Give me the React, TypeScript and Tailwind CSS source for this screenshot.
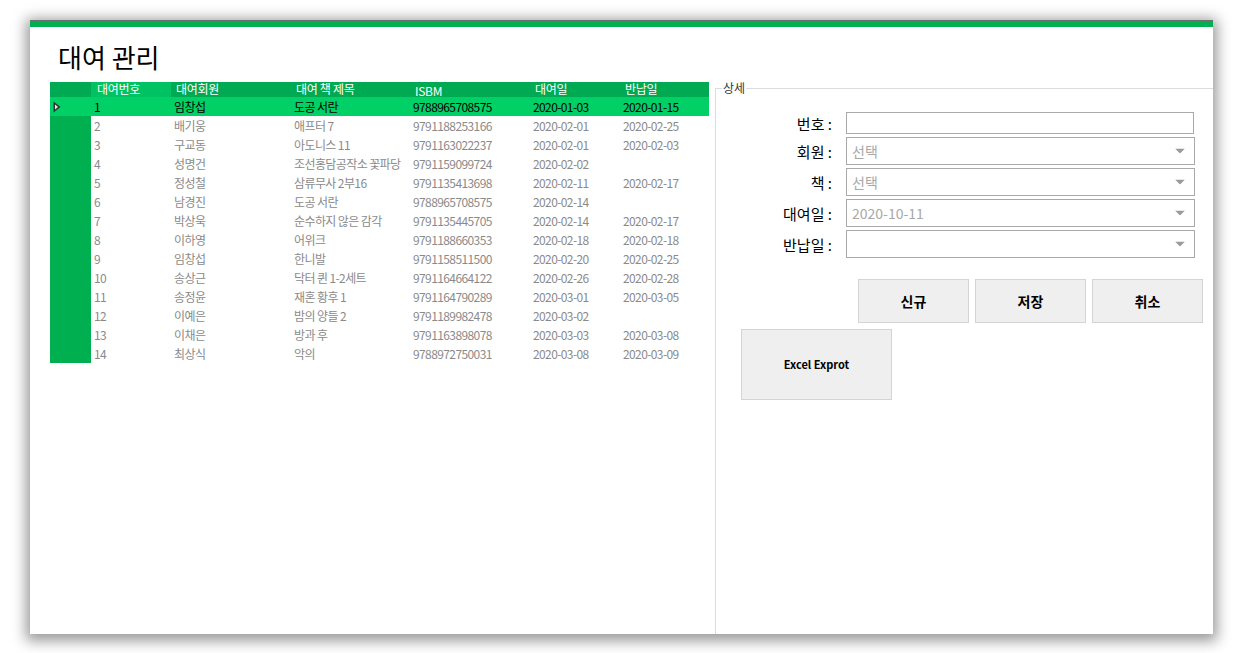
import React from "react";

const rows = [
  ["1", "임창섭", "도공 서란", "9788965708575", "2020-01-03", "2020-01-15"],
  ["2", "배기웅", "애프터 7", "9791188253166", "2020-02-01", "2020-02-25"],
  ["3", "구교동", "아도니스 11", "9791163022237", "2020-02-01", "2020-02-03"],
  ["4", "성명건", "조선홍담공작소 꽃파당", "9791159099724", "2020-02-02", ""],
  ["5", "정성철", "삼류무사 2부16", "9791135413698", "2020-02-11", "2020-02-17"],
  ["6", "남경진", "도공 서란", "9788965708575", "2020-02-14", ""],
  ["7", "박상욱", "순수하지 않은 감각", "9791135445705", "2020-02-14", "2020-02-17"],
  ["8", "이하영", "어위크", "9791188660353", "2020-02-18", "2020-02-18"],
  ["9", "임창섭", "한니발", "9791158511500", "2020-02-20", "2020-02-25"],
  ["10", "송상근", "닥터 퀸 1-2세트", "9791164664122", "2020-02-26", "2020-02-28"],
  ["11", "송정윤", "재혼 황후 1", "9791164790289", "2020-03-01", "2020-03-05"],
  ["12", "이예은", "밤의 양들 2", "9791189982478", "2020-03-02", ""],
  ["13", "이채은", "방과 후", "9791163898078", "2020-03-03", "2020-03-08"],
  ["14", "최상식", "악의", "9788972750031", "2020-03-08", "2020-03-09"],
];

const widths = ["w-[80px]", "w-[120px]", "w-[119px]", "w-[120px]", "w-[90px]", "w-[89px]"];
const headers = ["대여번호", "대여회원", "대여 책 제목", "ISBM", "대여일", "반납일"];

function Arrow() {
  return (
    <svg width="10" height="5" viewBox="0 0 10 5" className="absolute right-[9px] top-1/2 -translate-y-1/2">
      <polygon points="0,0 10,0 5,5" fill="#9a9a9a" />
    </svg>
  );
}

function Combo({ text }: { text: string }) {
  return (
    <div className="relative h-[28px] w-[349px] border border-[#a9a9a9] bg-white flex items-center pl-[5px] text-[14px] text-[#a8a8a8] leading-none">
      {text}
      <Arrow />
    </div>
  );
}

function Label({ children }: { children: React.ReactNode }) {
  return (
    <div className="w-[116px] text-right text-[15px] text-black leading-none">{children}</div>
  );
}

export default function App() {
  return (
    <div
      className="w-[1242px] h-[653px] bg-white pt-[20px] pl-[30px]"
      style={{ fontFamily: '"Noto Sans CJK KR", "Noto Sans", sans-serif' }}
    >
      <div className="w-[1183px] h-[614px] bg-white flex flex-col shadow-[0_3px_13px_4px_rgba(0,0,0,0.4)]">
        <div className="h-[1px] bg-[#6e6e6e]" />
        <div className="h-[6px] bg-[#00b050]" />
        <div className="h-[55px] pl-[28px] pt-[15px] text-[26px] leading-[30px] text-black">대여 관리</div>
        <div className="flex flex-1">
          {/* grid */}
          <div className="ml-[20px] w-[659px]">
            <div className="flex h-[15px] bg-[#00aa52] text-white text-[12px] leading-[14px] tracking-[-0.3px]">
              <div className="w-[41px]" />
              {headers.map((h, i) => (
                <div
                  key={h}
                  className={`${widths[i]} ${i === 0 ? "bg-[#00c262] pl-[6px]" : "pl-[5px]"} ${i === 3 ? "pt-[2px]" : ""}`}
                >
                  {h}
                </div>
              ))}
            </div>
            {rows.map((r, ri) => {
              const sel = ri === 0;
              return (
                <div key={ri} className="flex h-[19px] text-[12px] leading-[19px] tracking-[-0.6px]">
                  <div className={`w-[41px] flex items-center pl-[3px] ${sel ? "bg-[#00d066]" : "bg-[#00b050]"}`}>
                    {sel && (
                      <svg width="8" height="12" viewBox="0 0 8 12">
                        <polygon points="0.5,0.5 7.5,6 0.5,11.5" fill="#333333" />
                        <polygon points="2,3.5 5,6 2,8.5" fill="#e6e6e6" />
                      </svg>
                    )}
                  </div>
                  {r.map((c, ci) => (
                    <div
                      key={ci}
                      className={`${widths[ci]} pl-[3px] whitespace-nowrap overflow-hidden ${sel ? "bg-[#00d066] text-black" : "text-[#8a8a8a]"}`}
                    >
                      {c}
                    </div>
                  ))}
                </div>
              );
            })}
          </div>
          {/* group box */}
          <div className="relative ml-[6px] mt-[6px] flex-1 border-l border-t border-[#dcdcdc]">
            <div className="absolute -top-[9px] left-[6px] bg-white px-[1px] text-[12px] leading-[16px] text-[#333]">상세</div>
            <div className="pt-[23px] flex flex-col gap-[3px]">
              <div className="flex items-center">
                <Label>번호 :</Label>
                <div className="ml-[14px] h-[22px] w-[348px] border border-[#a9a9a9]" />
              </div>
              <div className="flex items-center">
                <Label>회원 :</Label>
                <div className="ml-[14px]"><Combo text="선택" /></div>
              </div>
              <div className="flex items-center">
                <Label>책 :</Label>
                <div className="ml-[14px]"><Combo text="선택" /></div>
              </div>
              <div className="flex items-center">
                <Label>대여일 :</Label>
                <div className="ml-[14px]"><Combo text="2020-10-11" /></div>
              </div>
              <div className="flex items-center">
                <Label>반납일 :</Label>
                <div className="ml-[14px]"><Combo text="" /></div>
              </div>
            </div>
            <div className="mt-[21px] ml-[142px] flex gap-[6px]">
              {["신규", "저장", "취소"].map((b) => (
                <div
                  key={b}
                  className="w-[111px] h-[44px] bg-[#efefef] border border-[#d4d4d4] flex items-center justify-center text-[14px] font-bold text-black"
                >
                  {b}
                </div>
              ))}
            </div>
            <div className="mt-[6px] ml-[25px] w-[151px] h-[71px] bg-[#efefef] border border-[#d4d4d4] flex items-center justify-center text-[11px] font-bold text-black">
              Excel Exprot
            </div>
          </div>
        </div>
      </div>
    </div>
  );
}
